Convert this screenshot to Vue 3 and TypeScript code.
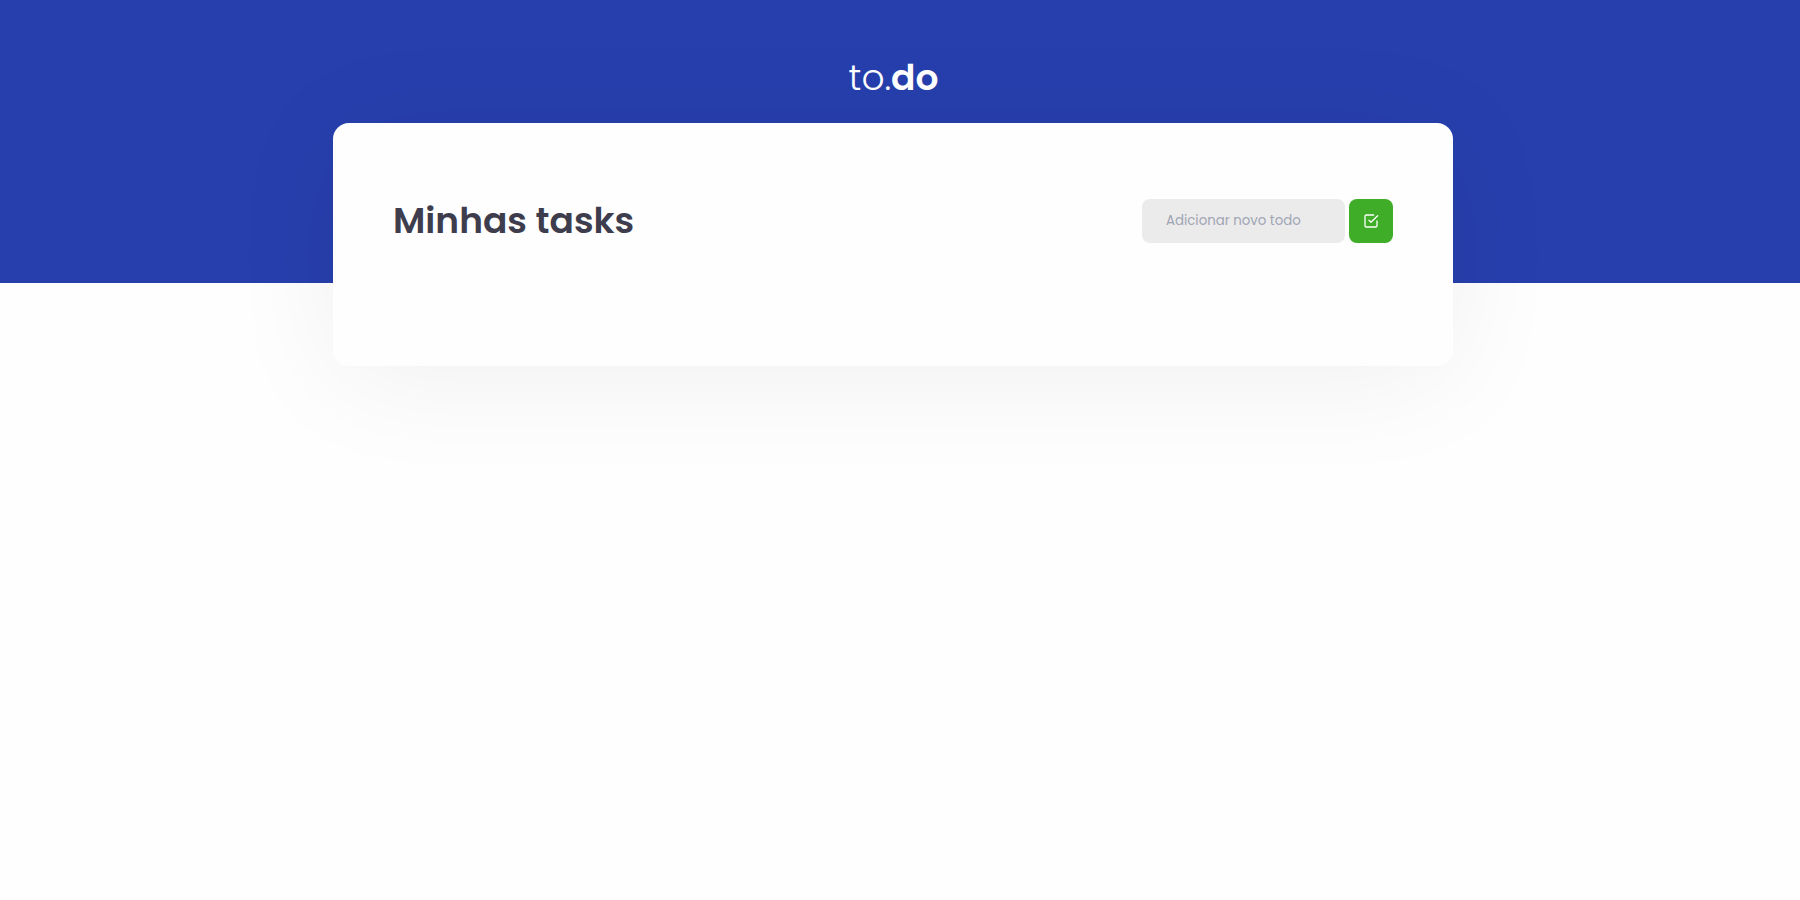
<script setup lang="ts">
import { ref } from 'vue'

interface Task {
  id: number
  title: string
}

const newTask = ref<string>('')
const tasks = ref<Task[]>([])

function addTask(): void {
  const title = newTask.value.trim()
  if (!title) return
  tasks.value.push({ id: Date.now(), title })
  newTask.value = ''
}
</script>

<template>
  <div class="page">
    <header class="header">
      <div class="logo">to.<strong>do</strong></div>
    </header>
    <div class="content">
      <main class="card">
        <div class="card-head">
          <h1>Minhas tasks</h1>
          <form class="new-task" @submit.prevent="addTask">
            <input v-model="newTask" type="text" placeholder="Adicionar novo todo" aria-label="Adicionar novo todo" />
            <button type="submit" aria-label="Adicionar">
              <svg viewBox="0 0 24 24" width="16" height="16" aria-hidden="true">
                <path d="M9 11l3 3L22 4" />
                <path d="M21 12v7a2 2 0 0 1-2 2H5a2 2 0 0 1-2-2V5a2 2 0 0 1 2-2h11" />
              </svg>
            </button>
          </form>
        </div>
        <ul class="tasks">
          <li v-for="task in tasks" :key="task.id">{{ task.title }}</li>
        </ul>
      </main>
    </div>
  </div>
</template>

<style>
html,
body {
  background: #fefefe;
}
</style>

<style scoped>
.page {
  min-height: 100vh;
  box-sizing: border-box;
  font-family: Poppins, Inter, sans-serif;
  color: #3d3d4d;
}

.header {
  height: 283px;
  box-sizing: border-box;
  padding: 51px 13px 0 0;
  background: #273fad;
  text-align: center;
}

.logo {
  color: #fefefe;
  font-size: 36px;
  line-height: 54px;
  font-weight: 300;
}

.logo strong {
  font-weight: 600;
}

.content {
  margin-top: -160px;
  padding-right: 14px;
}

.card {
  max-width: 1120px;
  box-sizing: border-box;
  margin: 0 auto;
  padding: 71px 60px 64px;
  border-radius: 16px;
  background: #fefefe;
  box-shadow: 0 12px 120px rgba(0, 0, 0, 0.06);
}

.card-head {
  display: flex;
  align-items: center;
  justify-content: space-between;
}

h1 {
  margin: 0;
  font-size: 36px;
  line-height: 54px;
  font-weight: 600;
}

.new-task {
  display: flex;
  gap: 4px;
}

input {
  width: 203px;
  height: 44px;
  box-sizing: border-box;
  padding: 0 24px;
  border: 0;
  border-radius: 8px;
  background: #ebebeb;
  color: #3d3d4d;
  font-family: Poppins, Inter, sans-serif;
}

input::placeholder {
  color: #a0a5b4;
  opacity: 1;
}

button {
  display: flex;
  align-items: center;
  justify-content: center;
  width: 44px;
  height: 44px;
  padding: 0;
  border: 0;
  border-radius: 8px;
  background: #3fad27;
  cursor: pointer;
}

svg {
  fill: none;
  stroke: #fefefe;
  stroke-width: 2;
  stroke-linecap: round;
  stroke-linejoin: round;
}

.tasks {
  margin: 0;
  padding: 54px 0 0;
  list-style: none;
}

.tasks li {
  padding: 16px 0;
}
</style>
